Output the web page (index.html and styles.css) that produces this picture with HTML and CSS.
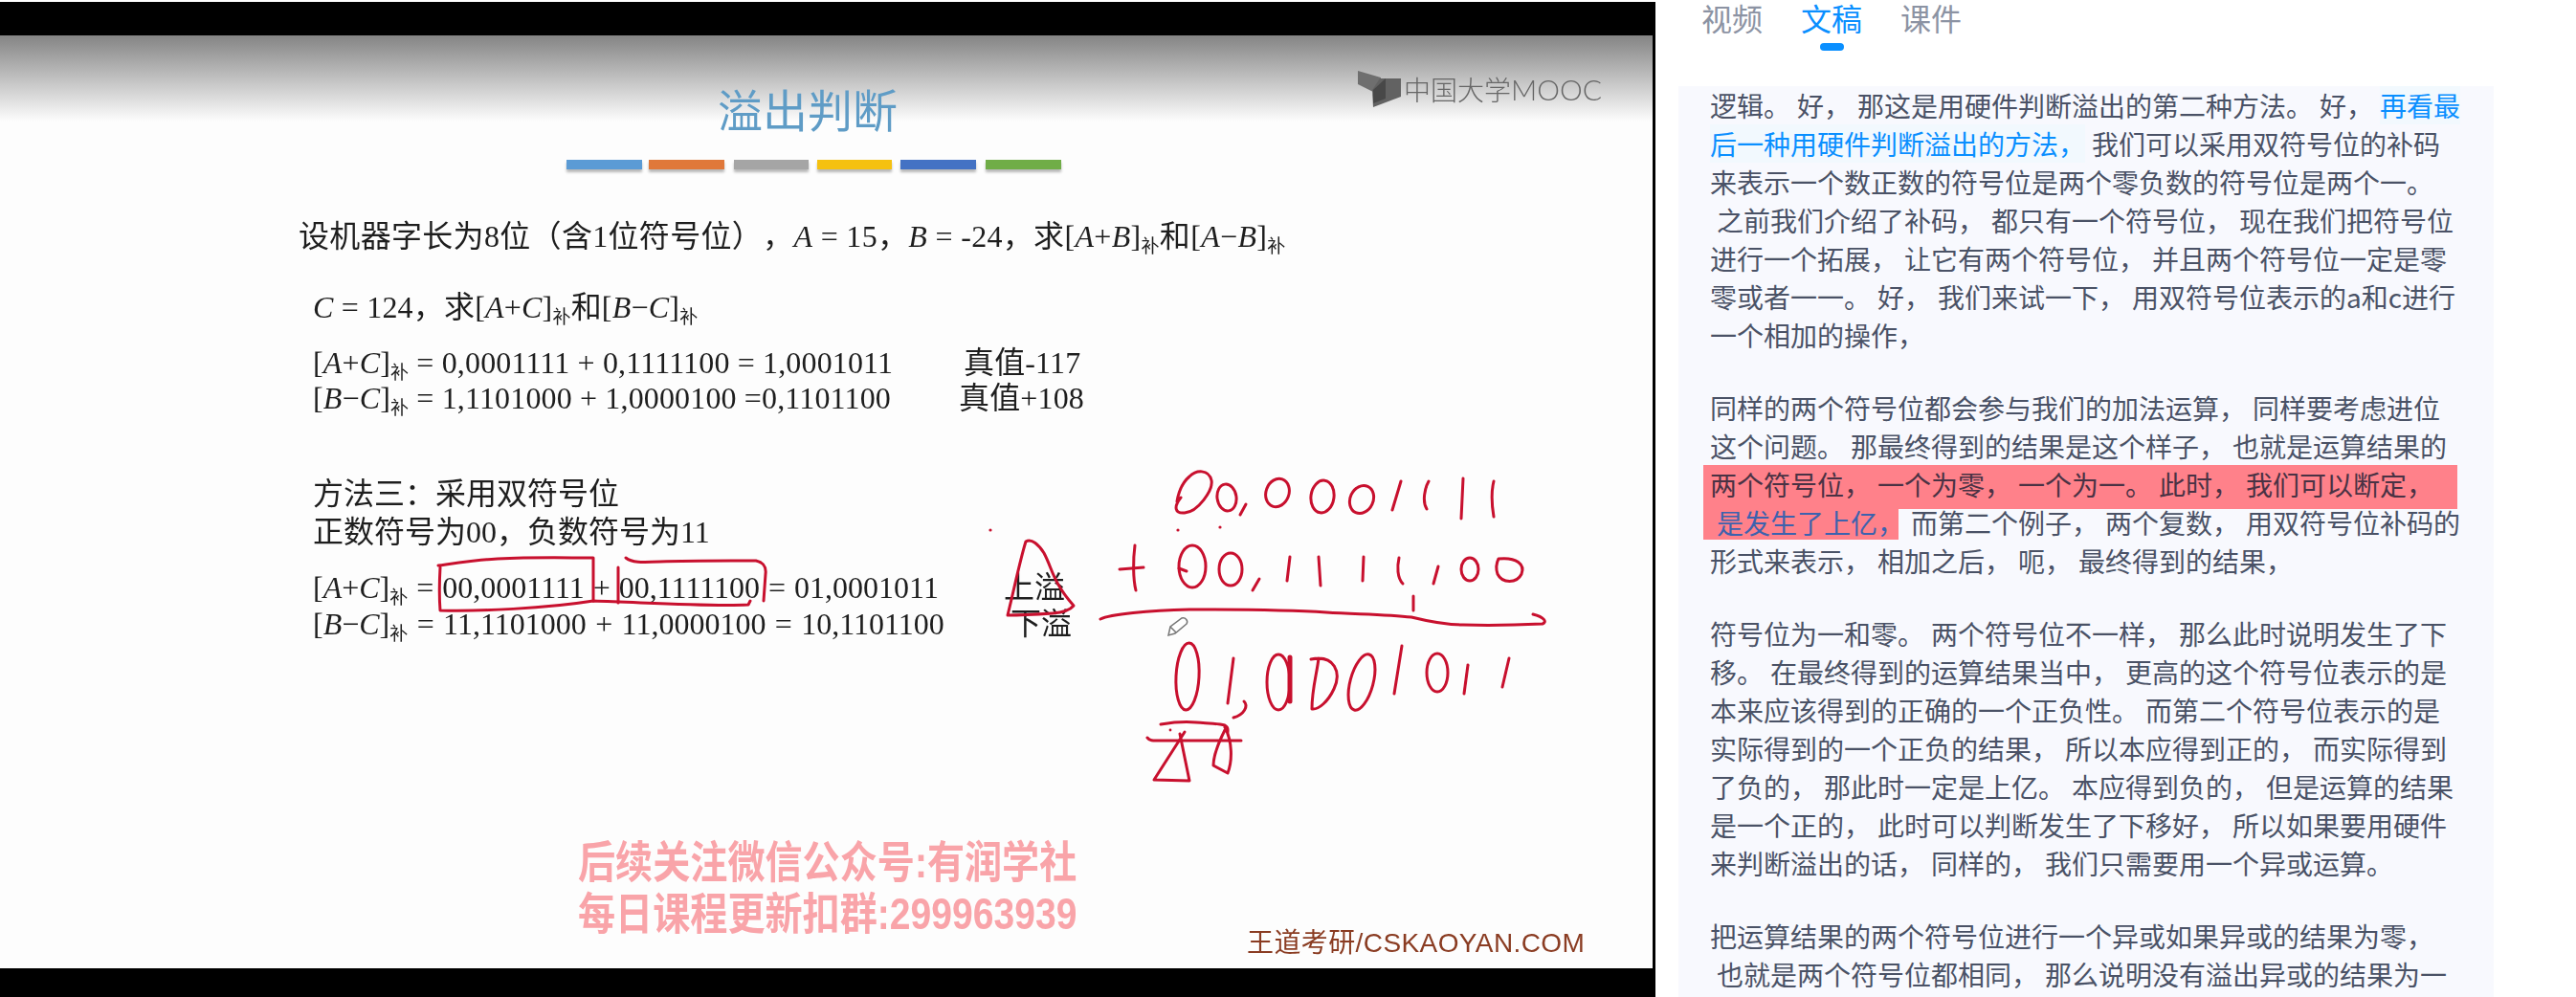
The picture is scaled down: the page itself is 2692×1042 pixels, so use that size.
FILE: index.html
```html
<!DOCTYPE html>
<html lang="zh-CN">
<head>
  <meta charset="UTF-8">
  <title>溢出判断</title>
  <link rel="stylesheet" href="styles.css">
</head>
<body>
<div class="video">
  <div class="slide">
    <div class="head">
      <h1 class="title">溢出判断</h1>
      <div class="logo">
        <svg class="logo-mark" viewBox="0 0 46 38" width="46" height="38">
          <path d="M0 0 L24 7 V16 L16 22 L0 14Z" fill="#6f6f6f"/>
          <path d="M23 8 H45 V27 L16 38 L15 20Z" fill="#626262"/>
          <path d="M16 20 L29 8 V29 L16 34Z" fill="#484848"/>
        </svg>
        <span class="logo-cn">中国大学</span><span class="logo-en">MOOC</span>
      </div>
    </div>
    <div class="bars">
      <span class="bar bar-blue"></span>
      <span class="bar bar-orange"></span>
      <span class="bar bar-gray"></span>
      <span class="bar bar-yellow"></span>
      <span class="bar bar-navy"></span>
      <span class="bar bar-green"></span>
    </div>
    <div class="group group-1">
      <div class="row">设机器字长为8位（含1位符号位），<i>A</i> = 15，<i>B</i> = -24，求[<i>A</i>+<i>B</i>]<span class="sub">补</span>和[<i>A</i>−<i>B</i>]<span class="sub">补</span></div>
    </div>
    <div class="group group-2">
      <div class="row"><i>C</i> = 124，求[<i>A</i>+<i>C</i>]<span class="sub">补</span>和[<i>B</i>−<i>C</i>]<span class="sub">补</span></div>
    </div>
    <div class="group group-3">
      <div class="row"><span class="expr expr-a">[<i>A</i>+<i>C</i>]<span class="sub">补</span> = 0,0001111 + 0,1111100 = 1,0001011</span><span>真值-117</span></div>
      <div class="row"><span class="expr expr-b">[<i>B</i>−<i>C</i>]<span class="sub">补</span> = 1,1101000 + 1,0000100 =0,1101100</span><span>真值+108</span></div>
    </div>
    <div class="group group-4">
      <div class="row">方法三：采用双符号位</div>
      <div class="row row-tight">正数符号为00，负数符号为11</div>
    </div>
    <div class="group group-5">
      <div class="row"><span class="expr expr-c">[<i>A</i>+<i>C</i>]<span class="sub">补</span> = 00,0001111 + 00,1111100 = 01,0001011</span><span>上溢</span></div>
      <div class="row"><span class="expr expr-d">[<i>B</i>−<i>C</i>]<span class="sub">补</span> = 11,1101000 + 11,0000100 = 10,1101100</span><span>下溢</span></div>
    </div>
    <div class="foot">
      <div class="watermark">后续关注微信公众号:有润学社<br>每日课程更新扣群:299963939</div>
      <div class="site">王道考研/CSKAOYAN.COM</div>
    </div>
  </div>
  <!-- handwriting on top of the slide, in page coordinates -->
  <svg class="ink" viewBox="0 0 1730 1042" width="1730" height="1042">
    <g class="stroke">
      <!-- boxes round the formula -->
      <path d="M458 591 C480 588 500 585 520 584 C560 582 590 583 620 583 V628"/>
      <path d="M460 593 C459 610 459 625 460 638 C500 639 570 636 620 628 C680 630 740 634 782 632 L784 628"/>
      <path d="M646 593 V630"/>
      <path d="M654 583 C660 588 670 588 690 587 C720 586 760 586 790 586 C798 588 801 592 800 600 L798 628"/>
      <!-- triangle over 上溢 -->
      <path d="M1053 643 C1060 615 1066 585 1072 566 C1078 562 1086 570 1091 578 C1100 595 1100 608 1122 633 C1118 638 1112 640 1100 641 C1085 642 1068 643 1053 643Z"/>
      <!-- 00,0001111 -->
      <path d="M1234 520 C1226 530 1228 537 1238 536 C1252 535 1268 512 1266 502 C1263 490 1250 491 1243 498 C1236 504 1232 512 1230 524"/>
      <ellipse cx="1282" cy="520" rx="10" ry="14" transform="rotate(-8 1282 520)"/>
      <path d="M1302 527 L1296 538"/>
      <ellipse cx="1335" cy="515" rx="12" ry="15" transform="rotate(20 1335 515)"/>
      <ellipse cx="1382" cy="519" rx="12" ry="17" transform="rotate(8 1382 519)"/>
      <ellipse cx="1423" cy="522" rx="12" ry="15" transform="rotate(25 1423 522)"/>
      <path d="M1464 503 L1455 533"/>
      <path d="M1493 503 C1489 510 1486 524 1491 532"/>
      <path d="M1529 500 L1527 542"/>
      <path d="M1561 503 C1558 515 1559 528 1561 540"/>
      <!-- + 00,1111100 -->
      <path d="M1170 595 L1195 593"/>
      <path d="M1186 570 C1184 585 1184 605 1187 617"/>
      <ellipse cx="1246" cy="592" rx="14" ry="22"/>
      <path d="M1232 594 L1240 597"/>
      <ellipse cx="1286" cy="595" rx="12" ry="17"/>
      <path d="M1316 605 L1309 617"/>
      <path d="M1348 582 L1345 607"/>
      <path d="M1378 582 L1380 612"/>
      <path d="M1425 582 L1424 607"/>
      <path d="M1462 583 C1460 592 1460 604 1466 610"/>
      <path d="M1503 592 L1498 610"/>
      <ellipse cx="1536" cy="595" rx="9" ry="12"/>
      <path d="M1566 584 C1585 582 1594 590 1590 600 C1585 610 1570 610 1565 600 C1563 594 1564 588 1566 584"/>
      <path d="M1477 623 V638"/>
      <!-- sum line with its tail -->
      <path d="M1150 647 C1160 642 1200 638 1243 637 C1290 637 1340 637 1386 640 C1420 642 1450 642 1475 645 C1495 650 1510 653 1529 653 C1560 654 1590 653 1612 652 C1617 650 1614 645 1602 642"/>
      <!-- 01,0001011 -->
      <ellipse cx="1241" cy="707" rx="12" ry="35" transform="rotate(3 1241 707)"/>
      <path d="M1289 688 L1283 735"/>
      <path d="M1300 733 C1305 738 1300 747 1289 750"/>
      <ellipse cx="1336" cy="713" rx="12" ry="29"/>
      <path class="thick" d="M1348 687 V733"/>
      <path d="M1370 689 C1395 684 1402 703 1394 720 C1388 733 1378 742 1371 741 C1371 720 1376 705 1378 688"/>
      <ellipse cx="1423" cy="713" rx="12" ry="30" transform="rotate(15 1423 713)"/>
      <path d="M1465 675 L1457 725"/>
      <ellipse cx="1502" cy="703" rx="11" ry="20"/>
      <path d="M1534 695 L1530 725"/>
      <path d="M1577 688 L1570 718"/>
      <!-- scrawl under the result -->
      <path d="M1213 757 C1225 755 1240 754 1250 755 C1262 756 1272 756 1280 758 C1284 760 1283 762 1283 765"/>
      <path d="M1199 771 C1202 775 1206 774 1215 774 H1297"/>
      <path d="M1238 765 L1206 815 L1243 816 L1233 767"/>
      <path d="M1280 763 C1274 775 1268 790 1268 800 L1283 808 C1288 795 1288 775 1280 760"/>
    </g>
    <g class="dots">
      <circle cx="1035" cy="554" r="1.6"/>
      <circle cx="1231" cy="554" r="1.6"/>
      <circle cx="1275" cy="551" r="1.6"/>
      <circle cx="1223" cy="763" r="1.4"/>
    </g>
    <!-- pen cursor -->
    <path class="pen" d="M1221 664 L1223 655 L1235 646 C1239 645 1242 649 1240 652 L1228 662Z M1223 655 L1229 661"/>
  </svg>
</div>
<div class="side">
  <div class="tabs">
    <div class="tab">视频</div>
    <div class="tab tab-on">文稿<span class="tab-dash"></span></div>
    <div class="tab">课件</div>
  </div>
  <div class="panel">
    <div class="para">逻辑。 好， 那这是用硬件判断溢出的第二种方法。 好， <span class="now">再看最
</span><span class="now">后一种用硬件判断溢出的方法，</span> 我们可以采用双符号位的补码
来表示一个数正数的符号位是两个零负数的符号位是两个一。
 之前我们介绍了补码， 都只有一个符号位， 现在我们把符号位
进行一个拓展， 让它有两个符号位， 并且两个符号位一定是零
零或者一一。 好， 我们来试一下， 用双符号位表示的a和c进行
一个相加的操作，</div>
    <div class="para"><i class="hl hl-a"></i><i class="hl hl-b"></i><span class="para-text">同样的两个符号位都会参与我们的加法运算， 同样要考虑进位
这个问题。 那最终得到的结果是这个样子， 也就是运算结果的
<span class="marked">两个符号位， 一个为零， 一个为一。 此时， 我们可以断定，
</span><span class="marked-blue"> 是发生了上亿，</span> 而第二个例子， 两个复数， 用双符号位补码的
形式来表示， 相加之后， 呃， 最终得到的结果，</span></div>
    <div class="para">符号位为一和零。 两个符号位不一样， 那么此时说明发生了下
移。 在最终得到的运算结果当中， 更高的这个符号位表示的是
本来应该得到的正确的一个正负性。 而第二个符号位表示的是
实际得到的一个正负的结果， 所以本应得到正的， 而实际得到
了负的， 那此时一定是上亿。 本应得到负的， 但是运算的结果
是一个正的， 此时可以判断发生了下移好， 所以如果要用硬件
来判断溢出的话， 同样的， 我们只需要用一个异或运算。</div>
    <div class="para">把运算结果的两个符号位进行一个异或如果异或的结果为零，
 也就是两个符号位都相同， 那么说明没有溢出异或的结果为一</div>
  </div>
</div>
</body>
</html>
```

FILE: styles.css
```css
* { box-sizing: border-box; margin: 0; padding: 0; }
html, body { height: 100%; }
body {
  display: flex;
  height: 1042px;
  overflow: hidden;
  background: #fff;
  font-family: "Noto Sans CJK SC", sans-serif;
  text-spacing-trim: space-all;
}

/* video side */
.video {
  position: relative;
  flex: none;
  width: 1730px;
  height: 1040px;
  margin-top: 2px;
  padding: 35px 3px 30px 0;
  background: #000;
}
.slide {
  display: flex;
  flex-direction: column;
  height: 975px;
  background: linear-gradient(#848484, #fdfdfd 90px);
  color: #1e1e1e;
  font-family: "Liberation Serif", "Noto Sans CJK SC", serif;
  font-size: 32px;
  filter: blur(.5px);
}
.head {
  display: flex;
  align-items: flex-start;
  padding: 38px 0 0 750px;
}
.title {
  margin-top: 15px;
  margin-bottom: 3px;
  font-family: "Noto Sans CJK SC", sans-serif;
  font-size: 47px;
  font-weight: 400;
  line-height: 46px;
  color: #5f9cc6;
}
.logo {
  display: flex;
  align-items: center;
  height: 36px;
  margin-left: 481px;
  color: #666;
  font-family: "Noto Sans CJK SC", sans-serif;
}
.logo-mark { flex: none; margin-right: 2px; }
.logo-cn { font-size: 28px; font-weight: 300; }
.logo-en { font-family: "Lato", sans-serif; font-size: 30px; font-weight: 300; }

.bars {
  display: flex;
  margin: 28px 0 0 592px;
}
.bar {
  width: 79px;
  height: 10px;
  margin-right: 8px;
  box-shadow: 0 3px 3px rgba(0, 0, 0, .28);
}
.bar-blue { background: #5b9bd5; margin-right: 7px; }
.bar-orange { background: #e0783a; margin-right: 10px; }
.bar-gray { background: #a5a5a5; width: 78px; margin-right: 9px; }
.bar-yellow { background: #f5c110; width: 78px; margin-right: 9px; }
.bar-navy { background: #4472c4; margin-right: 10px; }
.bar-green { background: #70ad47; }

.group { padding-left: 327px; }
.group-1 { margin-top: 52px; padding-left: 312px; letter-spacing: .32px; }
.group-2 { margin-top: 37px; letter-spacing: .2px; }
.group-3 { margin-top: 21px; letter-spacing: .15px; }
.group-4 { margin-top: 63px; }
.group-5 { margin-top: 21px; }
.group-5 .row + .row { margin-top: 1px; }
.row {
  height: 37px;
  line-height: 37px;
  white-space: pre;
}
.row-tight { margin-top: 3px; }
.expr { display: inline-block; }
.expr-a { width: 680px; }
.expr-b { width: 675px; }
.expr-c { width: 722px; word-spacing: 1px; }
.expr-d { width: 729px; word-spacing: 1.4px; }
.sub {
  font-family: "Noto Sans CJK SC", sans-serif;
  font-size: 19px;
  line-height: 0;
  vertical-align: -6px;
}

.foot {
  display: flex;
  align-items: flex-end;
  margin-top: auto;
  padding: 0 0 11px 604px;
}
.watermark {
  flex: none;
  width: 613px;
  margin-bottom: 19px;
  color: #f9a4a9;
  font-family: "Liberation Sans", "Noto Sans CJK SC", sans-serif;
  font-size: 46px;
  font-weight: 700;
  line-height: 54px;
  white-space: nowrap;
  transform: scaleX(.85);
  transform-origin: left;
}
.site {
  margin-left: 86px;
  color: #8a3c22;
  font-family: "Liberation Sans", "Noto Sans CJK SC", sans-serif;
  font-size: 28px;
  letter-spacing: .4px;
  line-height: 30px;
  white-space: nowrap;
}

/* handwriting layer */
.ink {
  position: absolute;
  top: -2px;
  left: 0;
  pointer-events: none;
  filter: blur(.4px);
}
.stroke {
  fill: none;
  stroke: #c8102e;
  stroke-width: 3;
  stroke-linecap: round;
  stroke-linejoin: round;
}
.thick { stroke-width: 5; }
.dots { fill: #c8102e; }
.pen { fill: #fff; stroke: #777; stroke-width: 1.5; }

/* transcript side */
.side {
  flex: none;
  width: 962px;
}
.tabs {
  display: flex;
  gap: 40px;
  height: 90px;
  padding-left: 48px;
}
.tab {
  display: flex;
  flex-direction: column;
  align-items: center;
  color: #8c93a3;
  font-size: 32px;
  line-height: 37px;
}
.tab-on { color: #0a8fff; }
.tab-dash {
  width: 25px;
  height: 8px;
  margin-top: 8px;
  border-radius: 4px;
  background: #0a8fff;
}
.panel {
  width: 852px;
  height: 952px;
  margin-left: 24px;
  padding-left: 33px;
  overflow: hidden;
  background: #f8f9fe;
  color: #4a5266;
  font-size: 28px;
  line-height: 40px;
  word-spacing: .7px;
}
.para {
  position: relative;
  margin-bottom: 36px;
  white-space: pre;
}
.para-text { position: relative; }
.now { background: #f2f9fe; color: #0a8fff; }
.hl {
  position: absolute;
  left: -7px;
  background: #ff818a;
}
.hl-a { top: 80px; width: 788px; height: 46px; }
.hl-b { top: 126px; width: 204px; height: 32px; }
.marked { color: #4a3244; }
.marked-blue { color: #3d62ae; }
```
